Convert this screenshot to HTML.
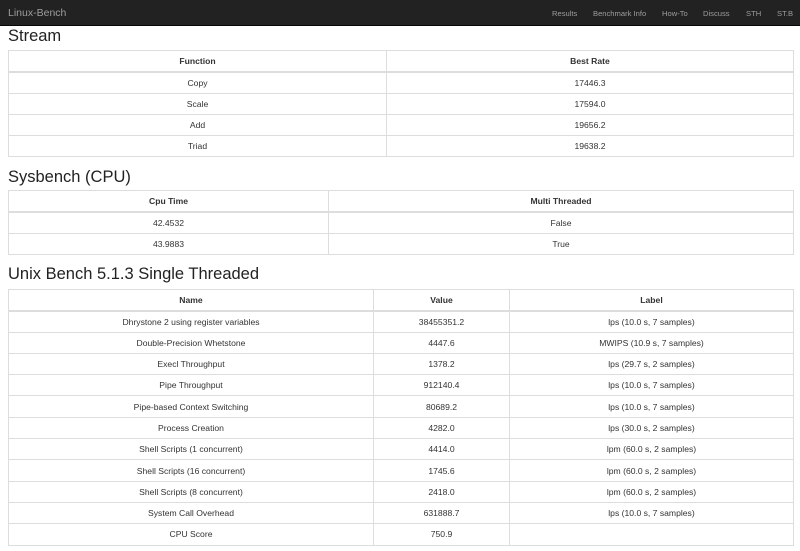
<!DOCTYPE html>
<html><head><meta charset="utf-8">
<style>
*{margin:0;padding:0;box-sizing:border-box}
body{width:800px;height:551px;overflow:hidden;background:#fff;font-family:"Liberation Sans",Arial,sans-serif;color:#333;position:relative}
.nav{position:absolute;left:0;top:0;width:800px;height:26px;background:#222;border-bottom:1px solid #080808}
.brand{position:absolute;left:8px;top:7px;font-size:10.5px;color:#9d9d9d}
.links{position:absolute;right:0;top:9px;font-size:7.6px;color:#9d9d9d}
.links span{position:absolute;white-space:nowrap}
h2{position:absolute;left:8px;font-weight:normal;font-size:16.5px;color:#222;line-height:1}
table{position:absolute;left:8px;width:786px;border-collapse:collapse;table-layout:fixed;font-size:8.6px}
td,th{border:1px solid #ddd;text-align:center;vertical-align:middle;padding:0;height:21.3px;color:#333}
th{font-weight:bold;border-bottom:2px solid #ddd}
</style></head><body>
<div class="nav">
<div class="brand">Linux-Bench</div>
<div class="links">
<span style="left:-248px">Results</span>
<span style="left:-207px">Benchmark Info</span>
<span style="left:-138px">How-To</span>
<span style="left:-97px">Discuss</span>
<span style="left:-54px">STH</span>
<span style="left:-23px">ST.B</span>
</div>
</div>
<h2 style="top:28px">Stream</h2>
<table style="top:50px">
<colgroup><col style="width:378px"><col></colgroup>
<tr><th>Function</th><th>Best Rate</th></tr>
<tr><td>Copy</td><td>17446.3</td></tr>
<tr><td>Scale</td><td>17594.0</td></tr>
<tr><td>Add</td><td>19656.2</td></tr>
<tr><td>Triad</td><td>19638.2</td></tr>
</table>
<h2 style="top:169px">Sysbench (CPU)</h2>
<table style="top:190px">
<colgroup><col style="width:320px"><col></colgroup>
<tr><th>Cpu Time</th><th>Multi Threaded</th></tr>
<tr><td>42.4532</td><td>False</td></tr>
<tr><td>43.9883</td><td>True</td></tr>
</table>
<h2 style="top:266px">Unix Bench 5.1.3 Single Threaded</h2>
<table style="top:289px">
<colgroup><col style="width:365px"><col style="width:136px"><col></colgroup>
<tr><th>Name</th><th>Value</th><th>Label</th></tr>
<tr><td>Dhrystone 2 using register variables</td><td>38455351.2</td><td>lps (10.0 s, 7 samples)</td></tr>
<tr><td>Double-Precision Whetstone</td><td>4447.6</td><td>MWIPS (10.9 s, 7 samples)</td></tr>
<tr><td>Execl Throughput</td><td>1378.2</td><td>lps (29.7 s, 2 samples)</td></tr>
<tr><td>Pipe Throughput</td><td>912140.4</td><td>lps (10.0 s, 7 samples)</td></tr>
<tr><td>Pipe-based Context Switching</td><td>80689.2</td><td>lps (10.0 s, 7 samples)</td></tr>
<tr><td>Process Creation</td><td>4282.0</td><td>lps (30.0 s, 2 samples)</td></tr>
<tr><td>Shell Scripts (1 concurrent)</td><td>4414.0</td><td>lpm (60.0 s, 2 samples)</td></tr>
<tr><td>Shell Scripts (16 concurrent)</td><td>1745.6</td><td>lpm (60.0 s, 2 samples)</td></tr>
<tr><td>Shell Scripts (8 concurrent)</td><td>2418.0</td><td>lpm (60.0 s, 2 samples)</td></tr>
<tr><td>System Call Overhead</td><td>631888.7</td><td>lps (10.0 s, 7 samples)</td></tr>
<tr><td>CPU Score</td><td>750.9</td><td></td></tr>
</table>
</body></html>
